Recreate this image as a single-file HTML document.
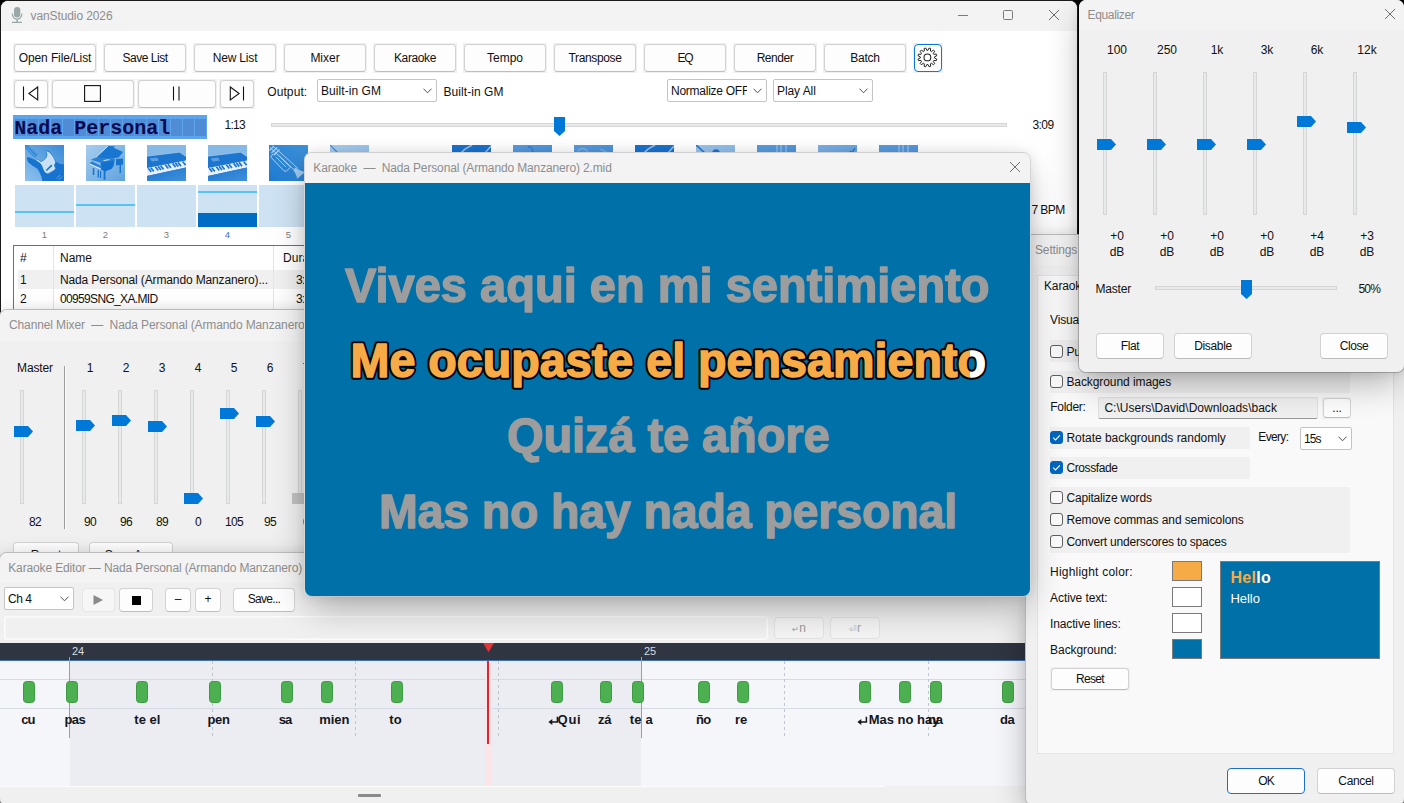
<!DOCTYPE html><html><head><meta charset="utf-8"><title>vanStudio 2026</title><style>
*{box-sizing:border-box;margin:0;padding:0}
html,body{width:1404px;height:803px;overflow:hidden;background:#000}
body{font-family:"Liberation Sans",sans-serif;font-size:12px;color:#111;position:relative}
.abs{position:absolute}
.win{position:absolute;background:#f0f0f0;border-radius:8px;overflow:hidden;border:1px solid rgba(0,0,0,.22)}
.tb{position:absolute;left:0;top:0;right:0;height:30px;background:#f3f3f3}
.tt{position:absolute;white-space:nowrap;color:#8d8d8d;font-size:12px;line-height:14px}
.t{position:absolute;white-space:nowrap;line-height:14px;font-size:12px;color:#111}
.btn{position:absolute;background:#fdfdfd;border:1px solid #d2d2d2;border-bottom-color:#bdbdbd;border-radius:4px;text-align:center;font-size:12px;color:#111;white-space:nowrap;}
.bb{position:absolute;background:#f0f0f0}
.btn span{position:absolute;left:0;right:0;text-align:center;line-height:14px}
.combo{position:absolute;background:#fff;border:1px solid #c4c4c4;border-radius:2px;font-size:12px;white-space:nowrap}
.combo span{position:absolute;left:3px;line-height:14px}
.combo svg{position:absolute;right:4px}
.vtrack{position:absolute;width:4px;background:#e7eaea;border:1px solid #d6d6d6}
.htrack{position:absolute;height:4px;background:#e7eaea;border:1px solid #d6d6d6}
.cb{position:absolute;width:13px;height:13px;border:1px solid #5f5f5f;border-radius:3px;background:#fafafa}
.cb.on{background:#0067c0;border-color:#0067c0}
.hl{color:#f7ab47;-webkit-text-stroke:0}
.sh{box-shadow:0 14px 36px -6px rgba(0,0,0,.33),0 0 12px rgba(0,0,0,.08)}
</style></head><body>
<!-- main window -->
<div class="win " style="left:0px;top:0px;width:1078px;height:700px;background:#fff;border-color:#1a1a1a"><div class="abs" style="left:-1px;top:-1px;width:1404px;height:803px">
<div class="abs" style="left:0;top:0;width:1080px;height:31px;background:#f3f3f3"></div>
<svg class="abs" style="left:10px;top:5px" width="15" height="20" viewBox="10 5 15 20"><rect x="14" y="6.9" width="6.3" height="10.5" rx="3.15" fill="#9aa7a7"/><path d="M12.3 13.6a4.8 5.6 0 0 0 9.6 0" fill="none" stroke="#9aa7a7" stroke-width="1.2"/><path d="M17.1 19.4V22.2" stroke="#9aa7a7" stroke-width="1.5" fill="none"/><path d="M11.9 22.4H22" stroke="#9aa7a7" stroke-width="1.1" fill="none"/></svg>
<div class="tt" style="left:30.5px;top:9px;letter-spacing:-0.100px;">vanStudio 2026</div>
<div class="abs" style="left:958px;top:15px;width:10px;height:1px;background:#7a7a7a"></div>
<div class="abs" style="left:1003px;top:10px;width:10px;height:10px;border:1px solid #7a7a7a;border-radius:1.5px"></div>
<svg class="abs" style="left:1047.5px;top:8.5px" width="12" height="12" viewBox="-6 -6 12 12"><path d="M-5 -5L5 5M5 -5L-5 5" stroke="#6a6a6a" stroke-width="1" fill="none"/></svg>
<div class="bb" style="left:13px;top:43px;width:84px;height:30px"></div><div class="btn " style="left:14px;top:44px;width:82px;height:28px;"><span style="top:6.0px;letter-spacing:-0.110px;">Open File/List</span></div>
<div class="bb" style="left:103px;top:43px;width:84px;height:30px"></div><div class="btn " style="left:104px;top:44px;width:82px;height:28px;"><span style="top:6.0px;letter-spacing:-0.457px;">Save List</span></div>
<div class="bb" style="left:193px;top:43px;width:84px;height:30px"></div><div class="btn " style="left:194px;top:44px;width:82px;height:28px;"><span style="top:6.0px;letter-spacing:-0.158px;">New List</span></div>
<div class="bb" style="left:283px;top:43px;width:84px;height:30px"></div><div class="btn " style="left:284px;top:44px;width:82px;height:28px;"><span style="top:6.0px;letter-spacing:-0.017px;">Mixer</span></div>
<div class="bb" style="left:373px;top:43px;width:84px;height:30px"></div><div class="btn " style="left:374px;top:44px;width:82px;height:28px;"><span style="top:6.0px;letter-spacing:-0.385px;">Karaoke</span></div>
<div class="bb" style="left:463px;top:43px;width:84px;height:30px"></div><div class="btn " style="left:464px;top:44px;width:82px;height:28px;"><span style="top:6.0px;letter-spacing:-0.004px;">Tempo</span></div>
<div class="bb" style="left:553px;top:43px;width:84px;height:30px"></div><div class="btn " style="left:554px;top:44px;width:82px;height:28px;"><span style="top:6.0px;letter-spacing:-0.361px;">Transpose</span></div>
<div class="bb" style="left:643px;top:43px;width:84px;height:30px"></div><div class="btn " style="left:644px;top:44px;width:82px;height:28px;"><span style="top:6.0px;letter-spacing:-1.169px;">EQ</span></div>
<div class="bb" style="left:733px;top:43px;width:84px;height:30px"></div><div class="btn " style="left:734px;top:44px;width:82px;height:28px;"><span style="top:6.0px;letter-spacing:-0.435px;">Render</span></div>
<div class="bb" style="left:823px;top:43px;width:84px;height:30px"></div><div class="btn " style="left:824px;top:44px;width:82px;height:28px;"><span style="top:6.0px;letter-spacing:-0.237px;">Batch</span></div>
<div class="bb" style="left:913px;top:43px;width:30px;height:30px"></div>
<div class="btn" style="left:914px;top:44px;width:28px;height:28px;border-color:#0a78d6;border-width:1px"></div>
<svg class="abs" style="left:914px;top:44px" width="28" height="28" viewBox="914 44 28 28"><path d="M927.92 50.32L929.08 48.05L930.62 48.46L930.49 51.01L931.39 51.53L933.53 50.14L934.66 51.27L933.27 53.41L933.79 54.31L936.34 54.18L936.75 55.72L934.48 56.88L934.48 57.92L936.75 59.08L936.34 60.62L933.79 60.49L933.27 61.39L934.66 63.53L933.53 64.66L931.39 63.27L930.49 63.79L930.62 66.34L929.08 66.75L927.92 64.48L926.88 64.48L925.72 66.75L924.18 66.34L924.31 63.79L923.41 63.27L921.27 64.66L920.14 63.53L921.53 61.39L921.01 60.49L918.46 60.62L918.05 59.08L920.32 57.92L920.32 56.88L918.05 55.72L918.46 54.18L921.01 54.31L921.53 53.41L920.14 51.27L921.27 50.14L923.41 51.53L924.31 51.01L924.18 48.46L925.72 48.05L926.88 50.32Z" fill="none" stroke="#222" stroke-width="1" stroke-linejoin="round"/><circle cx="927.4" cy="57.4" r="3.4" fill="none" stroke="#222" stroke-width="1.05"/></svg>
<div class="bb" style="left:13px;top:79px;width:36px;height:30px"></div><div class="btn " style="left:14px;top:80px;width:34px;height:28px;"><span style="top:6.0px;"></span></div>
<div class="bb" style="left:51px;top:79px;width:84px;height:30px"></div><div class="btn " style="left:52px;top:80px;width:82px;height:28px;"><span style="top:6.0px;"></span></div>
<div class="bb" style="left:137px;top:79px;width:80px;height:30px"></div><div class="btn " style="left:138px;top:80px;width:78px;height:28px;"><span style="top:6.0px;"></span></div>
<div class="bb" style="left:219px;top:79px;width:36px;height:30px"></div><div class="btn " style="left:220px;top:80px;width:34px;height:28px;"><span style="top:6.0px;"></span></div>
<svg class="abs" style="left:14px;top:80px" width="240" height="28" viewBox="0 0 240 28"><g fill="none" stroke="#111" stroke-width="1.1"><path d="M9.5 6.5V20.5"/><path d="M23.7 7L14.9 13.5L23.7 20Z"/><rect x="70.6" y="5.6" width="15.8" height="15.8"/><path d="M159.5 6.5V20.5M165 6.5V20.5"/><path d="M216.3 7L225.1 13.5L216.3 20Z"/><path d="M229.5 6.5V20.5"/></g></svg>
<div class="t" style="left:267.25px;top:85px;letter-spacing:0.092px;">Output:</div>
<div class="combo" style="left:317px;top:79px;width:120px;height:23px"><span style="top:3.5px;letter-spacing:0.059px;">Built-in GM</span><svg width="9" height="6" style="top:8.0px" viewBox="0 0 9 6"><path d="M0.5 0.7 L4.5 4.8 L8.5 0.7" fill="none" stroke="#505050" stroke-width="1"/></svg></div>
<div class="t" style="left:443.5px;top:85px;letter-spacing:0.059px;">Built-in GM</div>
<div class="combo" style="left:667px;top:79px;width:100px;height:23px"><span style="top:3.5px;letter-spacing:-0.257px;width:76px;overflow:hidden;">Normalize OFF</span><svg width="9" height="6" style="top:8.0px" viewBox="0 0 9 6"><path d="M0.5 0.7 L4.5 4.8 L8.5 0.7" fill="none" stroke="#505050" stroke-width="1"/></svg></div>
<div class="combo" style="left:773px;top:79px;width:100px;height:23px"><span style="top:3.5px;letter-spacing:-0.075px;">Play All</span><svg width="9" height="6" style="top:8.0px" viewBox="0 0 9 6"><path d="M0.5 0.7 L4.5 4.8 L8.5 0.7" fill="none" stroke="#505050" stroke-width="1"/></svg></div>
<div class="abs" style="left:13px;top:115px;width:194px;height:24px;background:#5ca4ec;overflow:hidden"><div class="abs" style="left:2px;top:3.5px;width:10.5px;height:17px;background:#4f8cd5"></div><div class="abs" style="left:14px;top:3.5px;width:10.5px;height:17px;background:#4f8cd5"></div><div class="abs" style="left:26px;top:3.5px;width:10.5px;height:17px;background:#4f8cd5"></div><div class="abs" style="left:38px;top:3.5px;width:10.5px;height:17px;background:#4f8cd5"></div><div class="abs" style="left:50px;top:3.5px;width:10.5px;height:17px;background:#4f8cd5"></div><div class="abs" style="left:62px;top:3.5px;width:10.5px;height:17px;background:#4f8cd5"></div><div class="abs" style="left:74px;top:3.5px;width:10.5px;height:17px;background:#4f8cd5"></div><div class="abs" style="left:86px;top:3.5px;width:10.5px;height:17px;background:#4f8cd5"></div><div class="abs" style="left:98px;top:3.5px;width:10.5px;height:17px;background:#4f8cd5"></div><div class="abs" style="left:110px;top:3.5px;width:10.5px;height:17px;background:#4f8cd5"></div><div class="abs" style="left:122px;top:3.5px;width:10.5px;height:17px;background:#4f8cd5"></div><div class="abs" style="left:134px;top:3.5px;width:10.5px;height:17px;background:#4f8cd5"></div><div class="abs" style="left:146px;top:3.5px;width:10.5px;height:17px;background:#4f8cd5"></div><div class="abs" style="left:158px;top:3.5px;width:10.5px;height:17px;background:#4f8cd5"></div><div class="abs" style="left:170px;top:3.5px;width:10.5px;height:17px;background:#4f8cd5"></div><div class="abs" style="left:182px;top:3.5px;width:10.5px;height:17px;background:#4f8cd5"></div><div class="abs" id="lcd" style="left:1.2px;top:2.4px;font-family:'Liberation Mono',monospace;font-weight:bold;font-size:20px;line-height:24px;letter-spacing:0px;color:#0a0a52;white-space:pre">Nada Personal</div></div>
<div class="t" style="left:224.5px;top:118px;letter-spacing:-0.714px;">1:13</div>
<div class="htrack" style="left:271px;top:123px;width:736px"></div>
<svg class="abs" style="left:554px;top:117px" width="11" height="19" viewBox="0 0 11 19"><path d="M0 0H11V14L5.5 19L0 14Z" fill="#0078d7"/></svg>
<div class="t" style="left:1032.5px;top:118px;letter-spacing:-0.589px;">3:09</div>
<svg class="abs" style="left:25px;top:145px" width="39" height="36" viewBox="0 0 39 36"><defs><linearGradient id="gi0" x1="1" y1="0" x2="0" y2="1"><stop offset="0" stop-color="#3a8bd8"/><stop offset="1" stop-color="#8ec1ed"/></linearGradient></defs><rect width="39" height="36" fill="url(#gi0)"/><path d="M0 0L3.2 0L13 9.5L9.5 12.5L0 3Z" fill="#3186d6"/><path d="M0.5 1.5L10 11M2.6 0.3L12 9.6" stroke="#7fb6e8" stroke-width=".7" fill="none"/><path d="M1.9 12.4C4 12 7 13.3 9 14.5C10.5 15.4 12 15.3 13 14.6L16 16.6L19.3 14.5L21.6 10.8L21.4 7.6L20.6 5.6C23.5 5 26.5 8.5 28.6 12.4C29.8 14.8 30.8 16.5 32 17.3C34.5 19 37 19.3 39 19.5L39 36L17.2 36C17.2 33 16 30.5 14.8 28C13.5 25.5 12.8 24.2 12 23.6C10.5 22.4 9.2 21.8 8 21C6 19.7 4.5 18.6 3.6 17.6C2.6 16.4 2 14.5 1.9 12.4Z" fill="#1674cf"/><path d="M21 6.2C22.8 6.4 24.2 7.2 25.2 8.2C26.8 9.8 27.8 11.5 28.4 12.7C29.3 14.5 30 16.3 30.5 17.4C30 18.5 29.2 19.2 29.1 20.2C29.2 21.3 30.2 22.4 30.5 23.4C29.5 24.6 28.2 25.6 27 26.3C25.5 27.2 24 28.2 22.6 28.6C21.2 28.3 20.2 27.5 19.5 26.5C18.4 24.8 17.9 22.7 17.1 20.8C16.5 19.6 15.6 18.4 14.5 17.6C13.5 16.9 12.2 16.4 11.1 15.8C11.6 15.2 12.4 14.9 13 15C14 15.5 15 16.5 16 17.1C17.3 16.6 18.6 15.8 19.5 14.8C20.6 13.7 21.6 12.4 22.1 11.1C22.4 10 22.3 8.9 22 8C21.8 7.3 21.3 6.8 21 6.2Z" fill="#c9e0f5"/><path d="M21.8 25L26.4 20.7" stroke="#1674cf" stroke-width="1.7" stroke-linecap="round"/><path d="M31.5 33.5L35 30M33.5 35L37 31.5" stroke="#5ea2e1" stroke-width="1"/></svg>
<svg class="abs" style="left:86px;top:145px" width="39" height="36" viewBox="0 0 39 36"><defs><linearGradient id="gi1" x1="0" y1="0" x2="1" y2="1"><stop offset="0" stop-color="#a6cdef"/><stop offset="1" stop-color="#5fa3de"/></linearGradient></defs><rect width="39" height="36" fill="url(#gi1)"/><path d="M22 1L29 1.2L27.8 2.8L37 7L32.6 12.6L22 14L9.6 12.6Z" fill="#1876d0"/><path d="M9.6 12.6L22 1" stroke="#e4f0fb" stroke-width=".9"/><path d="M4.8 14.8L10 12.6L29 13.4L28.5 16L15.5 18Z" fill="#2a80d4"/><path d="M14.8 17.6L28.5 15.5L27.6 21L25.5 24L19 26.4L14.4 24.2Z" fill="#1271ce"/><path d="M30 14L37 13.4L37 19.6L30 20.4Z" fill="#1674cf"/><path d="M1.9 19.4L6 16.2L16.2 21.4L14.2 24.6Z" fill="#2a80d4"/><path d="M2.8 18.8L14.6 23.8" stroke="#dcebf9" stroke-width="1.3"/><path d="M6.8 23h1.5v7H6.8zM11.7 25h1.3v7.6h-1.3zM14 26h1.2v7H14zM17.6 26h1.9v8.8h-1.9zM33.5 20h1.5v8h-1.5z" fill="#1674cf"/><path d="M17.5 15.6L23.5 14.6" stroke="#cfe3f6" stroke-width="1"/></svg>
<svg class="abs" style="left:147px;top:145px" width="39" height="36" viewBox="0 0 39 36"><defs><linearGradient id="gi2" x1="0" y1="0" x2="1" y2="1"><stop offset="0" stop-color="#86b9e6"/><stop offset="1" stop-color="#86b9e6"/></linearGradient></defs><rect width="39" height="36" fill="url(#gi2)"/><path d="M0 11.2L32.6 7.2L39 11.5L39 36L0 36Z" fill="#1c76d0"/><path d="M0 11.2L32.6 7.2L39 11.5" stroke="#a9cdee" stroke-width=".6" fill="none"/><path d="M2.5 13.5L10 12.6L11.9 15.5L4.8 16.6Z" fill="#5a9fdf"/><path d="M0 23.1L39 15.4L39 22.6L0 31Z" fill="#e8f1fb"/><path d="M1.2 23.2l3 3.7M3.8 22.7l3 3.7M8.3 21.8l3 3.7M11.0 21.3l3 3.7M13.6 20.7l3 3.7M18.3 19.8l3 3.7M21.0 19.3l3 3.7M25.6 18.4l3 3.7M28.3 17.9l3 3.7M31.0 17.4l3 3.7M35.6 16.5l3 3.7" stroke="#1c76d0" stroke-width="1.7" fill="none"/><path d="M0 31L39 22.6L39 36L0 36Z" fill="url(#gi2f)"/><defs><linearGradient id="gi2f" x1="0" y1="0" x2="1" y2="1"><stop offset="0" stop-color="#1a74cf"/><stop offset="1" stop-color="#4191da"/></linearGradient></defs></svg>
<svg class="abs" style="left:208px;top:145px" width="39" height="36" viewBox="0 0 39 36"><defs><linearGradient id="gi3" x1="0" y1="0" x2="1" y2="1"><stop offset="0" stop-color="#86b9e6"/><stop offset="1" stop-color="#86b9e6"/></linearGradient></defs><rect width="39" height="36" fill="url(#gi3)"/><path d="M0 11.2L32.6 7.2L39 11.5L39 36L0 36Z" fill="#1c76d0"/><path d="M0 11.2L32.6 7.2L39 11.5" stroke="#a9cdee" stroke-width=".6" fill="none"/><path d="M2.5 13.5L10 12.6L11.9 15.5L4.8 16.6Z" fill="#5a9fdf"/><path d="M0 23.1L39 15.4L39 22.6L0 31Z" fill="#e8f1fb"/><path d="M1.2 23.2l3 3.7M3.8 22.7l3 3.7M8.3 21.8l3 3.7M11.0 21.3l3 3.7M13.6 20.7l3 3.7M18.3 19.8l3 3.7M21.0 19.3l3 3.7M25.6 18.4l3 3.7M28.3 17.9l3 3.7M31.0 17.4l3 3.7M35.6 16.5l3 3.7" stroke="#1c76d0" stroke-width="1.7" fill="none"/><path d="M0 31L39 22.6L39 36L0 36Z" fill="url(#gi3f)"/><defs><linearGradient id="gi3f" x1="0" y1="0" x2="1" y2="1"><stop offset="0" stop-color="#1a74cf"/><stop offset="1" stop-color="#4191da"/></linearGradient></defs></svg>
<svg class="abs" style="left:269px;top:145px" width="39" height="36" viewBox="0 0 39 36"><defs><linearGradient id="gi4" x1="0" y1="1" x2="1" y2="0"><stop offset="0" stop-color="#1f7bd1"/><stop offset="1" stop-color="#3f92d9"/></linearGradient></defs><rect width="39" height="36" fill="url(#gi4)"/><g fill="none" stroke="#a8cdef" stroke-width="1"><path d="M3.5 0.5L29 23.5"/><path d="M1 2.5L26.5 26"/><path d="M2.2 12.5Q1.5 11 3 10L7.5 8.5L21.6 22.1L17.5 26Q16 26.8 14.8 25.6Z"/><path d="M7 12L17 22"/><path d="M9.5 10.5L19.5 20"/><path d="M0.5 5.5L4.5 1.5M2.5 8L8 2.5M5 10L10.5 4.5" stroke-width="1.2"/></g><path d="M26 22.5C29.5 24.5 32.5 26 36 27L28.2 33.8C27.6 30.5 26.2 27.5 24.5 25.5Z" fill="#9fc8ee"/></svg>
<svg class="abs" style="left:330px;top:145px" width="39" height="36" viewBox="0 0 39 36"><defs><linearGradient id="gi5" x1="0" y1="0" x2="1" y2="1"><stop offset="0" stop-color="#a9cdef"/><stop offset="1" stop-color="#8fbde8"/></linearGradient></defs><rect width="39" height="36" fill="url(#gi5)"/><path d="M0 0L8 8" stroke="#3b8bd9" stroke-width="1.2"/></svg>
<svg class="abs" style="left:452px;top:145px" width="39" height="36" viewBox="0 0 39 36"><defs><linearGradient id="gi7" x1="0" y1="0" x2="1" y2="1"><stop offset="0" stop-color="#1a72ce"/><stop offset="1" stop-color="#1a72ce"/></linearGradient></defs><rect width="39" height="36" fill="url(#gi7)"/><path d="M9 8C13 3 17 2 20 0M33 8L39 1" stroke="#8fbfec" stroke-width="1.6" fill="none"/></svg>
<svg class="abs" style="left:513px;top:145px" width="39" height="36" viewBox="0 0 39 36"><defs><linearGradient id="gi8" x1="0" y1="0" x2="1" y2="1"><stop offset="0" stop-color="#5a9cde"/><stop offset="1" stop-color="#3f8cd9"/></linearGradient></defs><rect width="39" height="36" fill="url(#gi8)"/><path d="M15 2C18 1 20 4 20 8" stroke="#2b7dd2" stroke-width="1.5" fill="none"/></svg>
<svg class="abs" style="left:574px;top:145px" width="39" height="36" viewBox="0 0 39 36"><defs><linearGradient id="gi9" x1="0" y1="0" x2="1" y2="1"><stop offset="0" stop-color="#5a9cde"/><stop offset="1" stop-color="#3f8cd9"/></linearGradient></defs><rect width="39" height="36" fill="url(#gi9)"/><path d="M4 6C8 2 12 3 14 8M26 4L34 8" stroke="#7fb3e6" stroke-width="1.3" fill="none"/></svg>
<svg class="abs" style="left:635px;top:145px" width="39" height="36" viewBox="0 0 39 36"><defs><linearGradient id="gi10" x1="0" y1="0" x2="1" y2="1"><stop offset="0" stop-color="#1a72ce"/><stop offset="1" stop-color="#1a72ce"/></linearGradient></defs><rect width="39" height="36" fill="url(#gi10)"/><path d="M9 8C13 3 17 2 20 0M33 8L39 1" stroke="#8fbfec" stroke-width="1.6" fill="none"/></svg>
<svg class="abs" style="left:696px;top:145px" width="39" height="36" viewBox="0 0 39 36"><defs><linearGradient id="gi11" x1="0" y1="0" x2="1" y2="1"><stop offset="0" stop-color="#9fc7ee"/><stop offset="1" stop-color="#7db3e6"/></linearGradient></defs><rect width="39" height="36" fill="url(#gi11)"/><path d="M0 0L10 9M17 8a3 3 0 0 1 6 0" stroke="#1f74cd" stroke-width="1.6" fill="#1f74cd"/></svg>
<svg class="abs" style="left:757px;top:145px" width="39" height="36" viewBox="0 0 39 36"><defs><linearGradient id="gi12" x1="0" y1="0" x2="1" y2="1"><stop offset="0" stop-color="#5a9cde"/><stop offset="1" stop-color="#4a93dc"/></linearGradient></defs><rect width="39" height="36" fill="url(#gi12)"/><path d="M20 0V8M24 0V8M29 0V8" stroke="#8fbfec" stroke-width="1.4"/></svg>
<svg class="abs" style="left:818px;top:145px" width="39" height="36" viewBox="0 0 39 36"><defs><linearGradient id="gi13" x1="0" y1="0" x2="1" y2="1"><stop offset="0" stop-color="#7db1e5"/><stop offset="1" stop-color="#5a9cde"/></linearGradient></defs><rect width="39" height="36" fill="url(#gi13)"/><path d="M32 6L34 7.5L37 3" stroke="#1f74cd" stroke-width="1.3" fill="none"/></svg>
<svg class="abs" style="left:879px;top:145px" width="39" height="36" viewBox="0 0 39 36"><defs><linearGradient id="gi14" x1="0" y1="0" x2="1" y2="1"><stop offset="0" stop-color="#5a9cde"/><stop offset="1" stop-color="#4a93dc"/></linearGradient></defs><rect width="39" height="36" fill="url(#gi14)"/><path d="M20 0V8M24 0V8M29 0V8" stroke="#8fbfec" stroke-width="1.4"/></svg>
<div class="abs" style="left:15px;top:185px;width:59px;height:42px;background:#cde2f3"></div>
<div class="t" style="left:15px;top:228px;width:59px;text-align:center;font-size:9.5px;color:#7d7d7d">1</div>
<div class="abs" style="left:76px;top:185px;width:59px;height:42px;background:#cde2f3"></div>
<div class="t" style="left:76px;top:228px;width:59px;text-align:center;font-size:9.5px;color:#7d7d7d">2</div>
<div class="abs" style="left:137px;top:185px;width:59px;height:42px;background:#cde2f3"></div>
<div class="t" style="left:137px;top:228px;width:59px;text-align:center;font-size:9.5px;color:#7d7d7d">3</div>
<div class="abs" style="left:198px;top:185px;width:59px;height:42px;background:#cde2f3"></div>
<div class="t" style="left:198px;top:228px;width:59px;text-align:center;font-size:9.5px;color:#2f76d2">4</div>
<div class="abs" style="left:259px;top:185px;width:59px;height:42px;background:#cde2f3"></div>
<div class="t" style="left:259px;top:228px;width:59px;text-align:center;font-size:9.5px;color:#7d7d7d">5</div>
<div class="abs" style="left:15px;top:211px;width:59px;height:2px;background:#56c4f6"></div>
<div class="abs" style="left:76px;top:204px;width:59px;height:2px;background:#56c4f6"></div>
<div class="abs" style="left:198px;top:191px;width:59px;height:2px;background:#56c4f6"></div>
<div class="abs" style="left:198px;top:213px;width:59px;height:14px;background:#006cc4"></div>
<div class="t" style="left:1031.4px;top:203px;letter-spacing:-0.543px;">7 BPM</div>
<div class="abs" style="left:13px;top:245px;width:1050px;height:80px;border:1px solid #6f6f6f;background:#fff"></div>
<div class="abs" style="left:18px;top:270px;width:1040px;height:19px;background:#f0f0f0"></div>
<div class="abs" style="left:53px;top:246px;width:1px;height:70px;background:#e5e5e5"></div>
<div class="abs" style="left:273px;top:246px;width:1px;height:70px;background:#e5e5e5"></div>
<div class="t" style="left:20px;top:251px;letter-spacing:-0.15px;">#</div>
<div class="t" style="left:60px;top:251px;letter-spacing:-0.003px;">Name</div>
<div class="t" style="left:283px;top:251px;letter-spacing:0.080px;">Duration</div>
<div class="t" style="left:20px;top:273px;letter-spacing:-0.15px;">1</div>
<div class="t" style="left:60px;top:273px;letter-spacing:-0.133px;">Nada Personal (Armando Manzanero)...</div>
<div class="t" style="left:296px;top:273px;letter-spacing:-0.589px;">3:09</div>
<div class="t" style="left:20px;top:292px;letter-spacing:-0.15px;">2</div>
<div class="t" style="left:60px;top:292px;letter-spacing:-0.659px;">00959SNG_XA.MID</div>
<div class="t" style="left:296px;top:292px;letter-spacing:-0.589px;">3:12</div>
</div></div>
<!-- channel mixer -->
<div class="win sh" style="left:-1px;top:309px;width:700px;height:300px;"><div class="abs" style="left:0px;top:-310px;width:1404px;height:803px">
<div class="abs" style="left:0;top:310px;width:700px;height:31px;background:#f3f3f3"></div>
<div class="tt" style="left:9px;top:318px;letter-spacing:-0.116px;">Channel Mixer &nbsp;—&nbsp; Nada Personal (Armando Manzanero</div>
<div class="t" style="left:17px;top:361px;letter-spacing:-0.112px;">Master</div>
<div class="abs" style="left:64px;top:366px;width:1px;height:163px;background:#9a9a9a"></div><div class="abs" style="left:65px;top:366px;width:1px;height:163px;background:#fdfdfd"></div>
<div class="vtrack" style="left:20px;top:390px;height:114px"></div>
<svg class="abs" style="left:14px;top:426px" width="19" height="11" viewBox="0 0 19 11"><path d="M0 0H14L19 5.5L14 11H0Z" fill="#0078d7"/></svg>
<div class="t" style="left:29.00px;top:515px;letter-spacing:-0.674px;">82</div>
<div class="vtrack" style="left:82px;top:390px;height:114px"></div>
<svg class="abs" style="left:76px;top:420px" width="19" height="11" viewBox="0 0 19 11"><path d="M0 0H14L19 5.5L14 11H0Z" fill="#0078d7"/></svg>
<div class="t" style="left:84.00px;top:515px;letter-spacing:-0.674px;">90</div>
<div class="t" style="left:70px;top:361px;width:40px;text-align:center">1</div>
<div class="vtrack" style="left:118px;top:390px;height:114px"></div>
<svg class="abs" style="left:112px;top:415px" width="19" height="11" viewBox="0 0 19 11"><path d="M0 0H14L19 5.5L14 11H0Z" fill="#0078d7"/></svg>
<div class="t" style="left:120.00px;top:515px;letter-spacing:-0.674px;">96</div>
<div class="t" style="left:106px;top:361px;width:40px;text-align:center">2</div>
<div class="vtrack" style="left:154px;top:390px;height:114px"></div>
<svg class="abs" style="left:148px;top:421px" width="19" height="11" viewBox="0 0 19 11"><path d="M0 0H14L19 5.5L14 11H0Z" fill="#0078d7"/></svg>
<div class="t" style="left:156.00px;top:515px;letter-spacing:-0.674px;">89</div>
<div class="t" style="left:142px;top:361px;width:40px;text-align:center">3</div>
<div class="vtrack" style="left:190px;top:390px;height:114px"></div>
<svg class="abs" style="left:184px;top:493px" width="19" height="11" viewBox="0 0 19 11"><path d="M0 0H14L19 5.5L14 11H0Z" fill="#0078d7"/></svg>
<div class="t" style="left:195.00px;top:515px;letter-spacing:-0.674px;">0</div>
<div class="t" style="left:178px;top:361px;width:40px;text-align:center">4</div>
<div class="vtrack" style="left:226px;top:390px;height:114px"></div>
<svg class="abs" style="left:220px;top:408px" width="19" height="11" viewBox="0 0 19 11"><path d="M0 0H14L19 5.5L14 11H0Z" fill="#0078d7"/></svg>
<div class="t" style="left:225.00px;top:515px;letter-spacing:-0.674px;">105</div>
<div class="t" style="left:214px;top:361px;width:40px;text-align:center">5</div>
<div class="vtrack" style="left:262px;top:390px;height:114px"></div>
<svg class="abs" style="left:256px;top:416px" width="19" height="11" viewBox="0 0 19 11"><path d="M0 0H14L19 5.5L14 11H0Z" fill="#0078d7"/></svg>
<div class="t" style="left:264.00px;top:515px;letter-spacing:-0.674px;">95</div>
<div class="t" style="left:250px;top:361px;width:40px;text-align:center">6</div>
<div class="vtrack" style="left:298px;top:390px;height:114px"></div>
<div class="abs" style="left:292px;top:493px;width:19px;height:11px;background:#c2c2c2"></div>
<div class="t" style="left:303.00px;top:515px;letter-spacing:-0.674px;">0</div>
<div class="t" style="left:286px;top:361px;width:40px;text-align:center">7</div>
<div class="btn " style="left:13px;top:542px;width:66px;height:25px;"><span style="top:4.5px;letter-spacing:-0.15px;">Reset</span></div>
<div class="btn " style="left:89px;top:542px;width:84px;height:25px;"><span style="top:4.5px;letter-spacing:-0.15px;">Save As...</span></div>
</div></div>
<!-- karaoke editor -->
<div class="win sh" style="left:-1px;top:552px;width:1045px;height:254px;"><div class="abs" style="left:0px;top:-553px;width:1404px;height:803px">
<div class="abs" style="left:0;top:552px;width:1030px;height:31px;background:#f3f3f3"></div>
<div class="tt" style="left:8.25px;top:561px;letter-spacing:-0.141px;">Karaoke Editor — Nada Personal (Armando Manzanero)</div>
<div class="combo" style="left:4px;top:587px;width:70px;height:23px"><span style="top:3.5px;letter-spacing:-0.462px;">Ch 4</span><svg width="9" height="6" style="top:8.0px" viewBox="0 0 9 6"><path d="M0.5 0.7 L4.5 4.8 L8.5 0.7" fill="none" stroke="#505050" stroke-width="1"/></svg></div>
<div class="btn " style="left:82px;top:588px;width:33px;height:24px;background:#f6f6f6;border-color:#e6e6e6"><span style="top:4.0px;"></span></div>
<svg class="abs" style="left:93px;top:594px" width="11" height="12" viewBox="0 0 11 12"><path d="M0.5 1L10 6L0.5 11Z" fill="#8a8a8a"/></svg>
<div class="btn " style="left:119px;top:588px;width:34px;height:24px;"><span style="top:4.0px;"></span></div>
<div class="abs" style="left:131.5px;top:595.5px;width:9px;height:9px;background:#000"></div>
<div class="btn " style="left:165px;top:588px;width:26px;height:24px;"><span style="top:3px;letter-spacing:-0.15px;">–</span></div>
<div class="btn " style="left:195px;top:588px;width:26px;height:24px;"><span style="top:3px;letter-spacing:-0.15px;">+</span></div>
<div class="btn " style="left:233px;top:588px;width:62px;height:24px;"><span style="top:3px;letter-spacing:-0.693px;">Save...</span></div>
<div class="abs" style="left:4px;top:616px;width:764px;height:24px;background:#f0f0f0;border:1px solid #fbfbfb;box-shadow:inset 0 0 0 1px #f6f6f6;border-radius:2px"></div>
<div class="btn " style="left:774px;top:617px;width:50px;height:22px;background:#f4f4f4;border-color:#e2e2e2"><span style="color:#9a9a9a;top:3px"><span style="position:static;font-size:8px">↵</span>n</span></div>
<div class="btn " style="left:830px;top:617px;width:50px;height:22px;background:#f4f4f4;border-color:#e2e2e2"><span style="color:#a5a5a5;top:3px"><span style="position:static;font-size:9px;color:#b5b5b5">⏎</span>r</span></div>
<div class="abs" style="left:0;top:643px;width:1026px;height:18px;background:#2f3541"></div>
<div class="abs" style="left:0;top:660px;width:1026px;height:1px;background:#3f6fb5"></div>
<div class="abs" style="left:0;top:661px;width:1026px;height:124.5px;background:#f5f6fa"></div>
<div class="abs" style="left:69.5px;top:661px;width:571.5px;height:124.5px;background:#ecedf2"></div>
<div class="abs" style="left:0;top:679px;width:1026px;height:1px;background:#d6dae2"></div>
<div class="abs" style="left:0;top:708px;width:1026px;height:1px;background:#d6dae2"></div>
<div class="abs" style="left:69px;top:657px;width:1px;height:81px;background:#9a9ca8"></div>
<div class="t" style="left:72px;top:644px;color:#d8dbe2;font-size:11px">24</div>
<div class="abs" style="left:641px;top:657px;width:1px;height:81px;background:#9a9ca8"></div>
<div class="t" style="left:644px;top:644px;color:#d8dbe2;font-size:11px">25</div>
<div class="abs" style="left:212px;top:661px;width:1px;height:75px;background:repeating-linear-gradient(#c0c5d2 0,#c0c5d2 3px,transparent 3px,transparent 6px)"></div>
<div class="abs" style="left:355px;top:661px;width:1px;height:75px;background:repeating-linear-gradient(#c0c5d2 0,#c0c5d2 3px,transparent 3px,transparent 6px)"></div>
<div class="abs" style="left:498px;top:661px;width:1px;height:75px;background:repeating-linear-gradient(#c0c5d2 0,#c0c5d2 3px,transparent 3px,transparent 6px)"></div>
<div class="abs" style="left:784px;top:661px;width:1px;height:75px;background:repeating-linear-gradient(#c0c5d2 0,#c0c5d2 3px,transparent 3px,transparent 6px)"></div>
<div class="abs" style="left:928px;top:661px;width:1px;height:75px;background:repeating-linear-gradient(#c0c5d2 0,#c0c5d2 3px,transparent 3px,transparent 6px)"></div>
<div class="abs" style="left:485px;top:743px;width:7px;height:43px;background:#fde4e7"></div>
<div class="abs" style="left:485px;top:661px;width:7px;height:83px;background:#fbe3e7"></div>
<div class="abs" style="left:487px;top:661px;width:2px;height:83px;background:#e0262c"></div>
<svg class="abs" style="left:483px;top:643px" width="11" height="10" viewBox="0 0 11 10"><path d="M0 0H11L5.5 9.3Z" fill="#e53338"/></svg>
<div class="abs" style="left:23px;top:681px;width:12px;height:22px;background:#4caf50;border:1px solid #3f9a45;border-radius:3.5px"></div>
<div class="abs" style="left:66px;top:681px;width:12px;height:22px;background:#4caf50;border:1px solid #3f9a45;border-radius:3.5px"></div>
<div class="abs" style="left:136px;top:681px;width:12px;height:22px;background:#4caf50;border:1px solid #3f9a45;border-radius:3.5px"></div>
<div class="abs" style="left:209px;top:681px;width:12px;height:22px;background:#4caf50;border:1px solid #3f9a45;border-radius:3.5px"></div>
<div class="abs" style="left:281px;top:681px;width:12px;height:22px;background:#4caf50;border:1px solid #3f9a45;border-radius:3.5px"></div>
<div class="abs" style="left:321px;top:681px;width:12px;height:22px;background:#4caf50;border:1px solid #3f9a45;border-radius:3.5px"></div>
<div class="abs" style="left:391px;top:681px;width:12px;height:22px;background:#4caf50;border:1px solid #3f9a45;border-radius:3.5px"></div>
<div class="abs" style="left:551px;top:681px;width:12px;height:22px;background:#4caf50;border:1px solid #3f9a45;border-radius:3.5px"></div>
<div class="abs" style="left:600px;top:681px;width:12px;height:22px;background:#4caf50;border:1px solid #3f9a45;border-radius:3.5px"></div>
<div class="abs" style="left:632px;top:681px;width:12px;height:22px;background:#4caf50;border:1px solid #3f9a45;border-radius:3.5px"></div>
<div class="abs" style="left:698px;top:681px;width:12px;height:22px;background:#4caf50;border:1px solid #3f9a45;border-radius:3.5px"></div>
<div class="abs" style="left:737px;top:681px;width:12px;height:22px;background:#4caf50;border:1px solid #3f9a45;border-radius:3.5px"></div>
<div class="abs" style="left:859px;top:681px;width:12px;height:22px;background:#4caf50;border:1px solid #3f9a45;border-radius:3.5px"></div>
<div class="abs" style="left:899px;top:681px;width:12px;height:22px;background:#4caf50;border:1px solid #3f9a45;border-radius:3.5px"></div>
<div class="abs" style="left:930px;top:681px;width:12px;height:22px;background:#4caf50;border:1px solid #3f9a45;border-radius:3.5px"></div>
<div class="abs" style="left:1002px;top:681px;width:12px;height:22px;background:#4caf50;border:1px solid #3f9a45;border-radius:3.5px"></div>
<div class="t" style="left:21.25px;top:712px;letter-spacing:-0.961px;font-weight:bold;font-size:13px;line-height:16px;color:#15171c">cu</div>
<div class="t" style="left:64.5px;top:712px;letter-spacing:-0.634px;font-weight:bold;font-size:13px;line-height:16px;color:#15171c">pas</div>
<div class="t" style="left:134.25px;top:712px;letter-spacing:0.047px;font-weight:bold;font-size:13px;line-height:16px;color:#15171c">te el</div>
<div class="t" style="left:207.5px;top:712px;letter-spacing:-0.371px;font-weight:bold;font-size:13px;line-height:16px;color:#15171c">pen</div>
<div class="t" style="left:278.75px;top:712px;letter-spacing:-0.855px;font-weight:bold;font-size:13px;line-height:16px;color:#15171c">sa</div>
<div class="t" style="left:319.25px;top:712px;letter-spacing:-0.023px;font-weight:bold;font-size:13px;line-height:16px;color:#15171c">mien</div>
<div class="t" style="left:389.25px;top:712px;letter-spacing:0.115px;font-weight:bold;font-size:13px;line-height:16px;color:#15171c">to</div>
<div class="t" style="left:557.5px;top:712px;letter-spacing:0.779px;font-weight:bold;font-size:13px;line-height:16px;color:#15171c">Qui</div>
<div class="t" style="left:598px;top:712px;letter-spacing:-0.365px;font-weight:bold;font-size:13px;line-height:16px;color:#15171c">zá</div>
<div class="t" style="left:629.75px;top:712px;letter-spacing:0.212px;font-weight:bold;font-size:13px;line-height:16px;color:#15171c">te a</div>
<div class="t" style="left:696px;top:712px;letter-spacing:-0.691px;font-weight:bold;font-size:13px;line-height:16px;color:#15171c">ño</div>
<div class="t" style="left:735px;top:712px;letter-spacing:-0.145px;font-weight:bold;font-size:13px;line-height:16px;color:#15171c">re</div>
<div class="t" style="left:868.7px;top:712px;letter-spacing:0.000px;font-weight:bold;font-size:13px;line-height:16px;color:#15171c">Mas no hay</div>
<div class="t" style="left:928px;top:712px;letter-spacing:-0.186px;font-weight:bold;font-size:13px;line-height:16px;color:#15171c">na</div>
<div class="t" style="left:1000px;top:712px;letter-spacing:-0.336px;font-weight:bold;font-size:13px;line-height:16px;color:#15171c">da</div>
<svg class="abs" style="left:548.3px;top:715.5px" width="11" height="10" viewBox="0 0 11 10"><path d="M9.4 0.8V6H2.5" fill="none" stroke="#15171c" stroke-width="1.5"/><path d="M4.3 3.1L0.4 6L4.3 8.9Z" fill="#15171c"/></svg>
<svg class="abs" style="left:857px;top:715.5px" width="11" height="10" viewBox="0 0 11 10"><path d="M9.4 0.8V6H2.5" fill="none" stroke="#15171c" stroke-width="1.5"/><path d="M4.3 3.1L0.4 6L4.3 8.9Z" fill="#15171c"/></svg>
<div class="abs" style="left:0;top:786px;width:884px;height:1px;background:#fdfdfd"></div>
<div class="abs" style="left:358px;top:794px;width:23px;height:3px;background:#8a8a8a;border-radius:1px"></div>
</div></div>
<!-- settings -->
<div class="win sh" style="left:1025px;top:234px;width:380px;height:572px;"><div class="abs" style="left:-1026px;top:-235px;width:1404px;height:803px">
<div class="abs" style="left:1026px;top:234px;width:400px;height:31px;background:#f3f3f3"></div>
<div class="tt" style="left:1035px;top:243px;letter-spacing:-0.15px;">Settings</div>
<div class="abs" style="left:1036.5px;top:295px;width:357px;height:459px;background:#f9f9f9;border:1px solid #e3e3e3"></div>
<div class="abs" style="left:1036.5px;top:275px;width:60px;height:21px;background:#f9f9f9;border:1px solid #e3e3e3;border-bottom:none"></div>
<div class="t" style="left:1044px;top:279px;letter-spacing:-0.15px;">Karaoke</div>
<div class="t" style="left:1050px;top:313px;letter-spacing:-0.15px;">Visualization</div>
<div class="abs" style="left:1050px;top:340px;width:300px;height:22px;background:#f0f0f0"></div>
<div class="abs" style="left:1050px;top:371px;width:300px;height:22px;background:#f0f0f0"></div>
<div class="abs" style="left:1050px;top:427px;width:200px;height:22px;background:#f0f0f0"></div>
<div class="abs" style="left:1050px;top:457px;width:200px;height:22px;background:#f0f0f0"></div>
<div class="abs" style="left:1050px;top:487px;width:300px;height:66px;background:#f0f0f0"></div>
<div class="cb" style="left:1050px;top:345px"></div>
<div class="t" style="left:1066.4px;top:345px;letter-spacing:-0.15px;">Public display</div>
<div class="cb" style="left:1050px;top:375px"></div>
<div class="t" style="left:1066.4px;top:375px;letter-spacing:-0.080px;">Background images</div>
<div class="t" style="left:1050.3px;top:400px;letter-spacing:-0.293px;">Folder:</div>
<div class="abs" style="left:1098px;top:397px;width:220px;height:22px;background:#f0f0f0;border:1px solid #e0e0e0;border-bottom-color:#9a9a9a;border-radius:2px"></div>
<div class="t" style="left:1104.4px;top:401px;letter-spacing:0.015px;">C:\Users\David\Downloads\back</div>
<div class="abs" style="left:1322px;top:397px;width:29px;height:22px;background:#f0f0f0"></div>
<div class="btn " style="left:1323px;top:398px;width:28px;height:20px;"><span style="top:1.5px;letter-spacing:-0.15px;">...</span></div>
<div class="cb on" style="left:1050px;top:431px"></div><svg class="abs" style="left:1050px;top:431px" width="13" height="13" viewBox="0 0 13 13"><path d="M3.2 6.6L5.5 8.9L9.9 4.3" fill="none" stroke="#fff" stroke-width="1.1"/></svg>
<div class="t" style="left:1066.4px;top:431px;letter-spacing:-0.026px;">Rotate backgrounds randomly</div>
<div class="t" style="left:1258.3px;top:430px;letter-spacing:-0.651px;">Every:</div>
<div class="combo" style="left:1300px;top:427px;width:52px;height:23px"><span style="top:3.5px;letter-spacing:-0.983px;">15s</span><svg width="9" height="6" style="top:8.0px" viewBox="0 0 9 6"><path d="M0.5 0.7 L4.5 4.8 L8.5 0.7" fill="none" stroke="#505050" stroke-width="1"/></svg></div>
<div class="cb on" style="left:1050px;top:461px"></div><svg class="abs" style="left:1050px;top:461px" width="13" height="13" viewBox="0 0 13 13"><path d="M3.2 6.6L5.5 8.9L9.9 4.3" fill="none" stroke="#fff" stroke-width="1.1"/></svg>
<div class="t" style="left:1066.4px;top:461px;letter-spacing:-0.388px;">Crossfade</div>
<div class="cb" style="left:1050px;top:491px"></div>
<div class="t" style="left:1066.4px;top:491px;letter-spacing:-0.165px;">Capitalize words</div>
<div class="cb" style="left:1050px;top:513px"></div>
<div class="t" style="left:1066.4px;top:513px;letter-spacing:-0.096px;">Remove commas and semicolons</div>
<div class="cb" style="left:1050px;top:535px"></div>
<div class="t" style="left:1066.4px;top:535px;letter-spacing:-0.203px;">Convert underscores to spaces</div>
<div class="t" style="left:1050.1px;top:565px;letter-spacing:0.208px;">Highlight color:</div>
<div class="abs" style="left:1172px;top:561px;width:30px;height:20px;background:#f7ab47;border:1px solid #7a7a7a"></div>
<div class="t" style="left:1050.1px;top:591px;letter-spacing:-0.099px;">Active text:</div>
<div class="abs" style="left:1172px;top:587px;width:30px;height:20px;background:#ffffff;border:1px solid #7a7a7a"></div>
<div class="t" style="left:1050.1px;top:617px;letter-spacing:-0.147px;">Inactive lines:</div>
<div class="abs" style="left:1172px;top:613px;width:30px;height:20px;background:#ffffff;border:1px solid #7a7a7a"></div>
<div class="t" style="left:1050.1px;top:643px;letter-spacing:-0.071px;">Background:</div>
<div class="abs" style="left:1172px;top:639px;width:30px;height:20px;background:#0070a8;border:1px solid #7a7a7a"></div>
<div class="abs" style="left:1220px;top:561px;width:160px;height:98px;background:#0070a8;border:1px solid #7a7a7a"></div>
<div class="t" style="left:1230.5px;top:569px;font-weight:bold;font-size:16px;line-height:18px;letter-spacing:0.297px;color:#fff"><span style="color:#f7ab47">Hel</span>lo</div>
<div class="t" style="left:1230.5px;top:592px;letter-spacing:-0.065px;color:#fff;font-size:13px">Hello</div>
<div class="abs" style="left:1050px;top:667px;width:80px;height:24px;background:#f0f0f0"></div>
<div class="btn " style="left:1051px;top:668px;width:78px;height:22px;"><span style="top:3.0px;letter-spacing:-0.710px;">Reset</span></div>
<div class="btn " style="left:1227px;top:768px;width:78px;height:26px;border-color:#1b6fd0"><span style="top:5.0px;letter-spacing:-0.919px;">OK</span></div>
<div class="btn " style="left:1317px;top:768px;width:78px;height:26px;"><span style="top:5.0px;letter-spacing:-0.326px;">Cancel</span></div>
</div></div>
<!-- karaoke -->
<div class="win sh" style="left:304px;top:152px;width:727px;height:445px;background:linear-gradient(#f3f3f3 0,#f3f3f3 31px,#0070a8 31px) no-repeat border-box;background-origin:border-box;border-color:#cfcfcf #d6d6d6 #c4c4c4 #d6d6d6"><div class="abs" style="left:-305px;top:-153px;width:1404px;height:803px">
<div class="abs" style="left:304px;top:151px;width:730px;height:32px;background:#f3f3f3"></div>
<div class="tt" style="left:313.3px;top:161px;letter-spacing:-0.139px;">Karaoke &nbsp;—&nbsp; Nada Personal (Armando Manzanero) 2.mid</div>
<svg class="abs" style="left:1008.5px;top:160.5px" width="12" height="12" viewBox="-6 -6 12 12"><path d="M-5 -5L5 5M5 -5L-5 5" stroke="#707070" stroke-width="1" fill="none"/></svg>
<svg class="abs" style="left:305px;top:183px" width="725" height="414" viewBox="305 183 725 414" font-family="Liberation Sans, sans-serif" font-weight="bold" font-size="49"><text x="345" y="302" textLength="644.5" lengthAdjust="spacingAndGlyphs" fill="#9d9d9d"  stroke="#9d9d9d" stroke-width="1.5" stroke-linejoin="round">Vives aqui en mi sentimiento</text><defs><linearGradient id="wipe" gradientUnits="userSpaceOnUse" x1="305" y1="0" x2="1030" y2="0"><stop offset="0" stop-color="#f7ab47"/><stop offset="0.9166" stop-color="#f7ab47"/><stop offset="0.9166" stop-color="#ffffff"/><stop offset="1" stop-color="#ffffff"/></linearGradient></defs><text x="350.5" y="377" textLength="635.5" lengthAdjust="spacingAndGlyphs" fill="#000" stroke="#000" stroke-width="5.6" stroke-linejoin="round">Me ocupaste el pensamiento</text><text x="350.5" y="377" textLength="635.5" lengthAdjust="spacingAndGlyphs" fill="url(#wipe)" stroke="url(#wipe)" stroke-width="1.5" stroke-linejoin="round">Me ocupaste el pensamiento</text><text x="507" y="451.5" textLength="322.5" lengthAdjust="spacingAndGlyphs" fill="#9d9d9d"  stroke="#9d9d9d" stroke-width="1.5" stroke-linejoin="round">Quizá te añore</text><text x="379" y="527.5" textLength="578" lengthAdjust="spacingAndGlyphs" fill="#9d9d9d"  stroke="#9d9d9d" stroke-width="1.5" stroke-linejoin="round">Mas no hay nada personal</text></svg>
</div></div>
<!-- equalizer -->
<div class="win sh" style="left:1078px;top:-1px;width:327px;height:374px;background-clip:padding-box"><div class="abs" style="left:-1079px;top:0px;width:1404px;height:803px">
<div class="abs" style="left:1079px;top:0;width:340px;height:30px;background:#f3f3f3"></div>
<div class="tt" style="left:1087.5px;top:8px;letter-spacing:-0.337px;">Equalizer</div>
<svg class="abs" style="left:1383.5px;top:7.5px" width="12" height="12" viewBox="-6 -6 12 12"><path d="M-5 -5L5 5M5 -5L-5 5" stroke="#707070" stroke-width="1" fill="none"/></svg>
<div class="t" style="left:1097px;top:43px;width:40px;text-align:center">100</div>
<div class="vtrack" style="left:1103px;top:72px;height:143px"></div>
<svg class="abs" style="left:1097px;top:139px" width="19" height="11" viewBox="0 0 19 11"><path d="M0 0H14L19 5.5L14 11H0Z" fill="#0078d7"/></svg>
<div class="t" style="left:1097px;top:228px;width:40px;text-align:center;line-height:16px">+0<br>dB</div>
<div class="t" style="left:1147px;top:43px;width:40px;text-align:center">250</div>
<div class="vtrack" style="left:1153px;top:72px;height:143px"></div>
<svg class="abs" style="left:1147px;top:139px" width="19" height="11" viewBox="0 0 19 11"><path d="M0 0H14L19 5.5L14 11H0Z" fill="#0078d7"/></svg>
<div class="t" style="left:1147px;top:228px;width:40px;text-align:center;line-height:16px">+0<br>dB</div>
<div class="t" style="left:1197px;top:43px;width:40px;text-align:center">1k</div>
<div class="vtrack" style="left:1203px;top:72px;height:143px"></div>
<svg class="abs" style="left:1197px;top:139px" width="19" height="11" viewBox="0 0 19 11"><path d="M0 0H14L19 5.5L14 11H0Z" fill="#0078d7"/></svg>
<div class="t" style="left:1197px;top:228px;width:40px;text-align:center;line-height:16px">+0<br>dB</div>
<div class="t" style="left:1247px;top:43px;width:40px;text-align:center">3k</div>
<div class="vtrack" style="left:1253px;top:72px;height:143px"></div>
<svg class="abs" style="left:1247px;top:139px" width="19" height="11" viewBox="0 0 19 11"><path d="M0 0H14L19 5.5L14 11H0Z" fill="#0078d7"/></svg>
<div class="t" style="left:1247px;top:228px;width:40px;text-align:center;line-height:16px">+0<br>dB</div>
<div class="t" style="left:1297px;top:43px;width:40px;text-align:center">6k</div>
<div class="vtrack" style="left:1303px;top:72px;height:143px"></div>
<svg class="abs" style="left:1297px;top:116px" width="19" height="11" viewBox="0 0 19 11"><path d="M0 0H14L19 5.5L14 11H0Z" fill="#0078d7"/></svg>
<div class="t" style="left:1297px;top:228px;width:40px;text-align:center;line-height:16px">+4<br>dB</div>
<div class="t" style="left:1347px;top:43px;width:40px;text-align:center">12k</div>
<div class="vtrack" style="left:1353px;top:72px;height:143px"></div>
<svg class="abs" style="left:1347px;top:122px" width="19" height="11" viewBox="0 0 19 11"><path d="M0 0H14L19 5.5L14 11H0Z" fill="#0078d7"/></svg>
<div class="t" style="left:1347px;top:228px;width:40px;text-align:center;line-height:16px">+3<br>dB</div>
<div class="t" style="left:1095.5px;top:282px;letter-spacing:-0.196px;">Master</div>
<div class="htrack" style="left:1155px;top:286px;width:182px"></div>
<svg class="abs" style="left:1241px;top:280px" width="11" height="19" viewBox="0 0 11 19"><path d="M0 0H11V14L5.5 19L0 14Z" fill="#0078d7"/></svg>
<div class="t" style="left:1358.5px;top:282px;letter-spacing:-0.839px;">50%</div>
<div class="btn " style="left:1096px;top:333px;width:68px;height:26px;"><span style="top:5.0px;letter-spacing:-0.376px;">Flat</span></div>
<div class="btn " style="left:1174px;top:333px;width:78px;height:26px;"><span style="top:5.0px;letter-spacing:-0.360px;">Disable</span></div>
<div class="btn " style="left:1320px;top:333px;width:68px;height:26px;"><span style="top:5.0px;letter-spacing:-0.436px;">Close</span></div>
</div></div>
</body></html>
